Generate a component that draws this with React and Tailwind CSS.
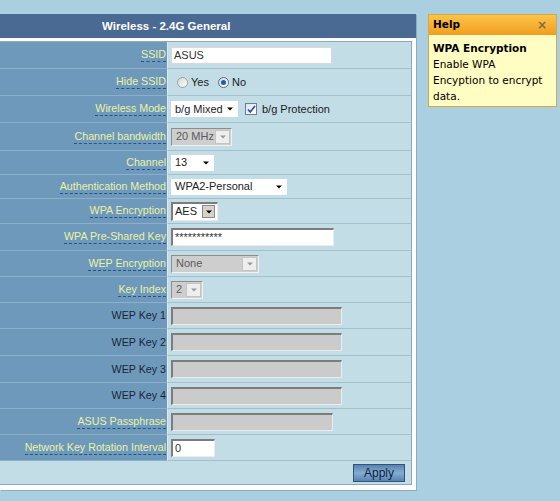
import React from 'react'

function Arrow({ color = '#000' }) {
  return (
    <svg width="6" height="4" viewBox="0 0 6 4">
      <path d="M0 0.5h6L3 3.5z" fill={color} />
    </svg>
  )
}

function PlainSelect({ w, text }) {
  return (
    <div className={`${w} h-[16px] bg-white flex items-center justify-between pl-[4px] pr-[5px] text-[#222]`}>
      <span>{text}</span>
      <Arrow />
    </div>
  )
}

function DisabledSelect({ w, text }) {
  return (
    <div className={`${w} h-[18px] bg-[#cecece] border-t border-l border-[#8c8c8c] border-b border-r border-b-[#f2f2f2] border-r-[#f2f2f2] flex items-center justify-between pl-[4px] pr-[1px] text-[#5b5b5b]`}>
      <span>{text}</span>
      <div className="w-[15px] h-[14px] bg-[#eeeeee] border border-[#c4c4c4] flex items-center justify-center">
        <Arrow color="#9a9a9a" />
      </div>
    </div>
  )
}

function TextBox({ w, text, disabled }) {
  return (
    <div
      className={`${w} h-[18px] border-t-2 border-l-2 border-[#7c7c7c] border-b border-r border-b-[#ececec] border-r-[#ececec] pl-[2px] leading-[15px] text-[#333] ${
        disabled ? 'bg-[#cbcbcb]' : 'bg-white'
      }`}
    >
      {text}
    </div>
  )
}

function Radio({ checked }) {
  return (
    <span
      className={`w-[11px] h-[11px] rounded-full border flex items-center justify-center bg-linear-to-br from-[#d6d6d6] to-white ${
        checked ? 'border-[#56708f]' : 'border-[#a0a0a0]'
      }`}
    >
      {checked && <span className="w-[5px] h-[5px] rounded-full bg-[#1d5fae]" />}
    </span>
  )
}

const rows = [
  {
    label: 'SSID', link: true, h: 'h-[27px]',
    content: (
      <div className="w-[161px] h-[17px] bg-white border border-[#d8d8d8] pl-[2px] leading-[15px] text-[#333]">ASUS</div>
    ),
  },
  {
    label: 'Hide SSID', link: true, h: 'h-[27px]',
    content: (
      <div className="flex items-center pl-[6px] text-[#1b1b1b]">
        <Radio />
        <span className="ml-[3px] mr-[9px]">Yes</span>
        <Radio checked />
        <span className="ml-[3px]">No</span>
      </div>
    ),
  },
  {
    label: 'Wireless Mode', link: true, h: 'h-[27px]',
    content: (
      <div className="flex items-center">
        <PlainSelect w="w-[67px]" text="b/g Mixed" />
        <span className="ml-[7px] w-[12px] h-[12px] border border-[#6f7f92] bg-linear-to-br from-[#d8e2ec] to-white flex items-center justify-center">
          <svg width="9" height="9" viewBox="0 0 9 9">
            <path d="M1 4.5l2.2 2.5L8 1" stroke="#2c4d98" strokeWidth="1.6" fill="none" />
          </svg>
        </span>
        <span className="ml-[5px] text-[#1b1b1b]">b/g Protection</span>
      </div>
    ),
  },
  { label: 'Channel bandwidth', link: true, h: 'h-[28px]', content: <DisabledSelect w="w-[61px]" text="20 MHz" /> },
  { label: 'Channel', link: true, h: 'h-[24px]', content: <PlainSelect w="w-[43px]" text="13" /> },
  { label: 'Authentication Method', link: true, h: 'h-[24px]', content: <PlainSelect w="w-[116px]" text="WPA2-Personal" /> },
  {
    label: 'WPA Encryption', link: true, h: 'h-[25px]',
    content: (
      <div className="w-[47px] h-[19px] bg-white border-t-2 border-l-2 border-[#7c7c7c] border-b border-r border-b-[#ececec] border-r-[#ececec] flex items-center justify-between pl-[2px] pr-[2px] text-[#222]">
        <span>AES</span>
        <div className="w-[13px] h-[13px] bg-[#d6d3cc] border border-[#8a8a8a] flex items-center justify-center">
          <Arrow />
        </div>
      </div>
    ),
  },
  {
    label: 'WPA Pre-Shared Key', link: true, h: 'h-[27px]',
    content: <TextBox w="w-[163px]" text="***********" />,
  },
  { label: 'WEP Encryption', link: true, h: 'h-[26px]', content: <DisabledSelect w="w-[88px]" text="None" /> },
  { label: 'Key Index', link: true, h: 'h-[26px]', content: <DisabledSelect w="w-[32px]" text="2" /> },
  { label: 'WEP Key 1', h: 'h-[26px]', content: <TextBox w="w-[171px]" disabled /> },
  { label: 'WEP Key 2', h: 'h-[27px]', content: <TextBox w="w-[171px]" disabled /> },
  { label: 'WEP Key 3', h: 'h-[27px]', content: <TextBox w="w-[171px]" disabled /> },
  { label: 'WEP Key 4', h: 'h-[26px]', content: <TextBox w="w-[171px]" disabled /> },
  { label: 'ASUS Passphrase', link: true, h: 'h-[26px]', content: <TextBox w="w-[162px]" disabled /> },
  { label: 'Network Key Rotation Interval', link: true, h: 'h-[26px]', content: <TextBox w="w-[44px]" text="0" /> },
]

export default function App() {
  return (
    <div className="w-[560px] h-[501px] bg-[#a9cfe1] flex items-start pt-[14px] gap-[12px] overflow-hidden font-['Liberation_Sans',Arial,sans-serif] text-[11px]">
      {/* main settings panel */}
      <div className="w-[416px] shrink-0 bg-white shadow-[1px_1px_0_#8eaec0]">
        <div className="h-[24px] bg-[#4b6a93] text-white font-bold text-[11.5px] leading-[24px] pl-[102px]">
          Wireless - 2.4G General
        </div>
        <div className="pt-[3px] pr-[4px] pb-[5px]">
          <div className="border-t border-r border-b border-[#8ea9b8]">
            {rows.map((r) => (
              <div key={r.label} className={`flex ${r.h}`}>
                <div className="w-[167px] shrink-0 bg-[#6f99ba] border-b border-[#8db0ca] flex items-center justify-end pr-[1px] text-[10.7px]">
                  {r.link ? (
                    <span className="text-[#e9f3a4] border-b border-dashed border-[#24548c] leading-[12px] pb-[1px]">{r.label}</span>
                  ) : (
                    <span className="text-[#16263a]">{r.label}</span>
                  )}
                </div>
                <div className="flex-1 bg-[#c3dde7] border-b border-[#a3bfcc] border-l border-l-[#dce9ee] pl-[3px] flex items-center">
                  {r.content}
                </div>
              </div>
            ))}
            <div className="h-[23px] bg-[#c3dde7] flex items-center justify-end pr-[6px]">
              <button className="w-[52px] h-[18px] border border-[#2f537d] bg-linear-to-b from-[#5883b0] via-[#86acd1] to-[#5883b0] text-[12px] leading-[16px] text-[#0c1f3b]">
                Apply
              </button>
            </div>
          </div>
        </div>
      </div>

      {/* help box */}
      <div className="w-[129px] shrink-0 border border-[#d9a545] bg-[#fffdc2] font-['DejaVu_Sans',Verdana,sans-serif] text-[10.5px] text-black">
        <div className="h-[20px] bg-linear-to-b from-[#fbc448] to-[#f09e1e] flex items-center justify-between pl-[4px] pr-[9px] font-bold">
          <span>Help</span>
          <span className="text-[#7d6a45] text-[12px]">×</span>
        </div>
        <div className="pl-[4px] pt-[5px] pb-[2px] leading-[16px] whitespace-nowrap">
          <div className="font-bold">WPA Encryption</div>
          <div>Enable WPA</div>
          <div>Encyption to encrypt</div>
          <div>data.</div>
        </div>
      </div>
    </div>
  )
}
